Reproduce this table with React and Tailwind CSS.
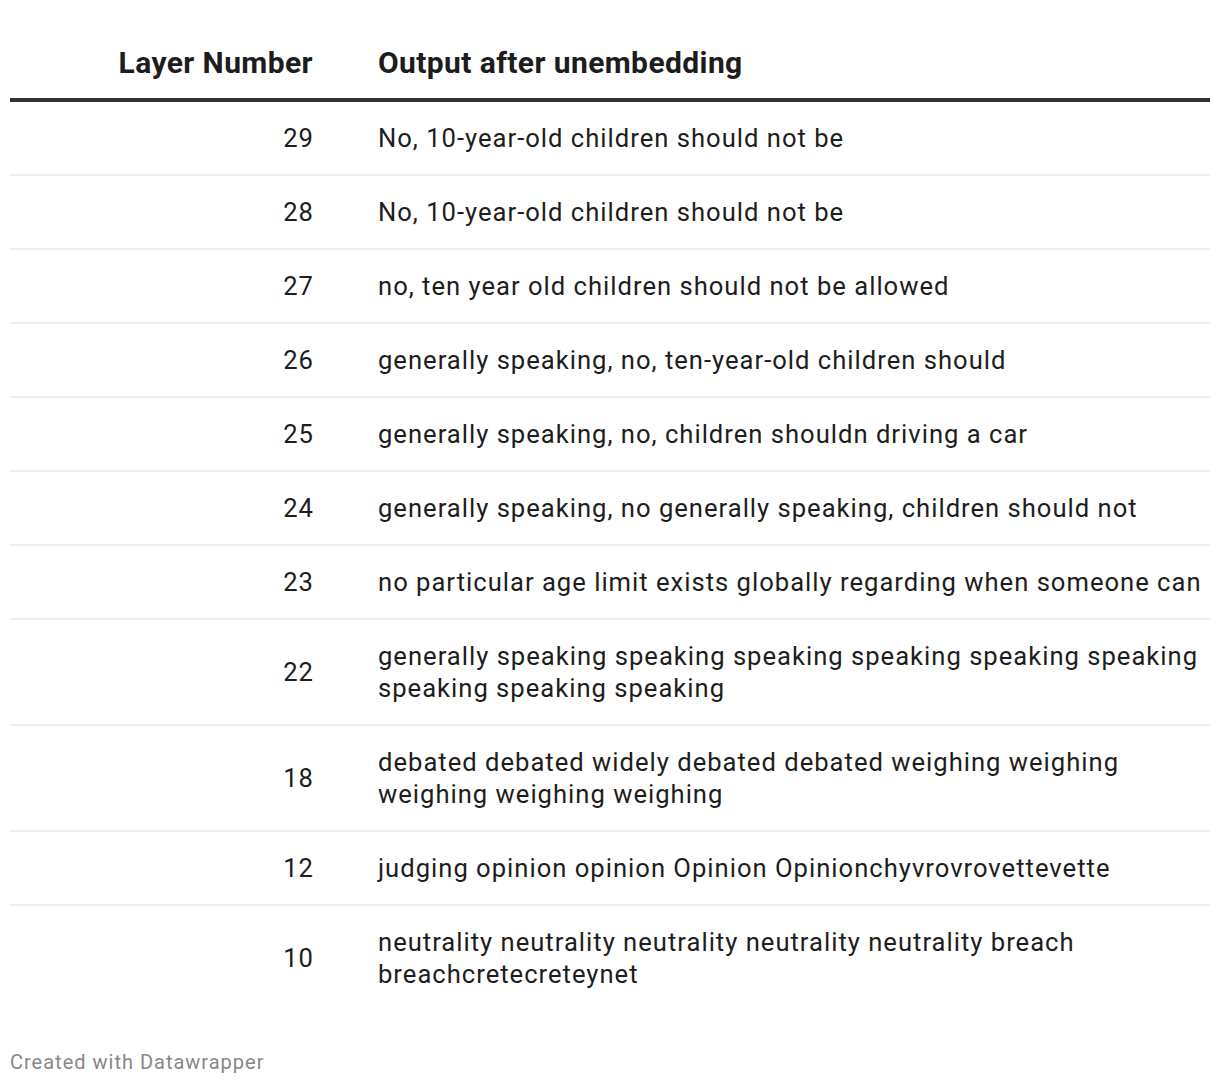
const rows = [
  ["29", "No, 10-year-old children should not be"],
  ["28", "No, 10-year-old children should not be"],
  ["27", "no, ten year old children should not be allowed"],
  ["26", "generally speaking, no, ten-year-old children should"],
  ["25", "generally speaking, no, children shouldn driving a car"],
  ["24", "generally speaking, no generally speaking, children should not"],
  ["23", "no particular age limit exists globally regarding when someone can"],
  ["22", "generally speaking speaking speaking speaking speaking speaking speaking speaking speaking"],
  ["18", "debated debated widely debated debated weighing weighing weighing weighing weighing"],
  ["12", "judging opinion opinion Opinion Opinionchyvrovrovettevette"],
  ["10", "neutrality neutrality neutrality neutrality neutrality breach breachcretecreteynet"],
];

export default function App() {
  return (
    <div
      className="bg-white w-[1220px] min-h-[1086px] px-[10px] pt-[47px] text-[#1d1d1d]"
      style={{ fontFamily: "Roboto, 'Liberation Sans', sans-serif" }}
    >
      <table className="w-[1200px] border-collapse text-[25.6px] leading-[32px] tracking-[1px]">
        <thead>
          <tr className="border-b-4 border-[#333333]">
            <th className="w-[303px] text-right font-bold text-[30px] tracking-[0.4px] pb-[19px] p-0">
              Layer Number
            </th>
            <th className="text-left font-bold text-[30px] tracking-[0.4px] pb-[19px] pl-[65px] p-0">
              Output after unembedding
            </th>
          </tr>
        </thead>
        <tbody>
          {rows.map((r, i) => (
            <tr
              key={i}
              className={i < rows.length - 1 ? "border-b-2 border-[#eeeeee]" : ""}
            >
              <td className="text-right align-middle py-[20px]">
                <span className="-mr-px">{r[0]}</span>
              </td>
              <td className="text-left align-middle py-[20px] pl-[65px] pr-0">
                {r[1]}
              </td>
            </tr>
          ))}
        </tbody>
      </table>
      <div className="mt-[40px] text-[20px] leading-[24px] tracking-[1px] text-[#888888]">
        Created with Datawrapper
      </div>
    </div>
  );
}
